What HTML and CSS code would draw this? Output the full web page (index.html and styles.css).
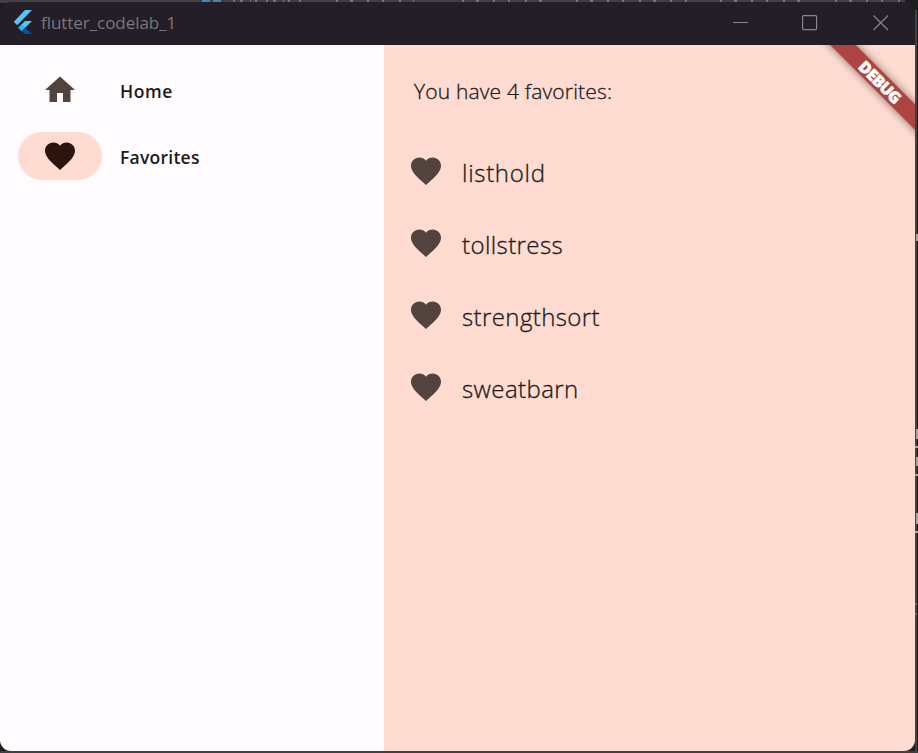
FILE: index.html
```
<!DOCTYPE html>
<html lang="en">
<head>
<meta charset="utf-8">
<title>flutter_codelab_1</title>
<link rel="stylesheet" href="styles.css">
</head>
<body>
<svg class="backdrop" width="918" height="753" aria-hidden="true">
  <path fill="#414144" d="M0 0h905v3H0zM915 10h2v743h-2zM0 751h918v2H0z"/>
  <path fill="#4b83b1" d="M202 0h8v2h-8zM213 0h8v2h-8z"/>
  <path stroke="#777775" stroke-width="2" stroke-dasharray="2 5 3 7 1 4 2 9" d="M233 1h70"/>
  <path stroke="#777775" stroke-width="2" stroke-dasharray="2 12 3 14 2 13 2 15" d="M336 1h78M462 1h88M576 1h118M720 1h90M835 1h73"/>
  <path fill="#a8a8a5" d="M915 446h3v2h-3zM915 474h3v2h-3zM915 531h3v2h-3zM916 429h2v10h-2zM916 457h2v9h-2zM916 513h2v11h-2zM916 234h2v7h-2z"/>
  <path fill="#755e54" d="M915 603h2v2h-2zM915 613h2v2h-2z"/>
</svg>
<div class="window">
  <header class="titlebar">
    <svg class="logo" width="20" height="26" viewBox="0 0 20 26">
      <path fill="#55c5f8" d="M12 1h7L4.2 16.2 0.8 12.7z"/>
      <path fill="#55c5f8" d="M12 12h7l-7 7-6.8-.1z"/>
      <path fill="#29b6f6" d="M8.7 15.3l3.5 3.5-3.5 3.5-3.5-3.5z"/>
      <path fill="#01579b" d="M8.7 22.3l3.5-3.5L19 25h-7.2z"/>
    </svg>
    <span class="title">flutter_codelab_1</span>
    <div class="controls">
      <svg width="16" height="16" viewBox="0 0 16 16"><path d="M0 7.5h15"/></svg>
      <svg width="16" height="16" viewBox="0 0 16 16"><rect x=".6" y=".6" width="14" height="14" rx="1"/></svg>
      <svg width="16" height="16" viewBox="0 0 16 16"><path d="M.5.5l14.5 14.5M15 .5L.5 15"/></svg>
    </div>
  </header>
  <div class="content">
    <nav class="rail">
      <div class="destination">
        <span class="indicator"><svg class="icon" viewBox="0 0 24 24"><path d="M10 20v-6h4v6h5v-8h3L12 3 2 12h3v8z"/></svg></span>
        <span class="label home">Home</span>
      </div>
      <div class="destination selected">
        <span class="indicator"><svg class="icon" viewBox="0 0 24 24"><path d="M12 21.35l-1.45-1.32C5.4 15.36 2 12.28 2 8.5 2 5.42 4.42 3 7.5 3c1.74 0 3.41.81 4.5 2.09C13.09 3.81 14.76 3 16.5 3 19.58 3 22 5.42 22 8.5c0 3.78-3.4 6.86-8.55 11.54z"/></svg></span>
        <span class="label">Favorites</span>
      </div>
    </nav>
    <main class="page">
      <p class="heading">You have 4 favorites:</p>
      <ul class="list">
        <li><svg class="icon" viewBox="0 0 24 24"><path d="M12 21.35l-1.45-1.32C5.4 15.36 2 12.28 2 8.5 2 5.42 4.42 3 7.5 3c1.74 0 3.41.81 4.5 2.09C13.09 3.81 14.76 3 16.5 3 19.58 3 22 5.42 22 8.5c0 3.78-3.4 6.86-8.55 11.54z"/></svg><span class="tall">listhold</span></li>
        <li><svg class="icon" viewBox="0 0 24 24"><path d="M12 21.35l-1.45-1.32C5.4 15.36 2 12.28 2 8.5 2 5.42 4.42 3 7.5 3c1.74 0 3.41.81 4.5 2.09C13.09 3.81 14.76 3 16.5 3 19.58 3 22 5.42 22 8.5c0 3.78-3.4 6.86-8.55 11.54z"/></svg><span>tollstress</span></li>
        <li><svg class="icon" viewBox="0 0 24 24"><path d="M12 21.35l-1.45-1.32C5.4 15.36 2 12.28 2 8.5 2 5.42 4.42 3 7.5 3c1.74 0 3.41.81 4.5 2.09C13.09 3.81 14.76 3 16.5 3 19.58 3 22 5.42 22 8.5c0 3.78-3.4 6.86-8.55 11.54z"/></svg><span>strengthsort</span></li>
        <li><svg class="icon" viewBox="0 0 24 24"><path d="M12 21.35l-1.45-1.32C5.4 15.36 2 12.28 2 8.5 2 5.42 4.42 3 7.5 3c1.74 0 3.41.81 4.5 2.09C13.09 3.81 14.76 3 16.5 3 19.58 3 22 5.42 22 8.5c0 3.78-3.4 6.86-8.55 11.54z"/></svg><span>sweatbarn</span></li>
      </ul>
      <div class="banner">DEBUG</div>
    </main>
  </div>
</div>
</body>
</html>
```
FILE: styles.css
```
* { box-sizing: border-box; }
body {
  margin: 0;
  width: 918px;
  height: 753px;
  overflow: hidden;
  padding: 2px 3px 2px 0;
  background: #1c1c1d;
  font-family: "Open Sans", "Noto Sans", sans-serif;
  color: #201a18;
}
.backdrop { position: absolute; left: 0; top: 0; }
.window {
  position: relative;
  height: 749px;
  display: flex;
  flex-direction: column;
  border-radius: 11px;
  overflow: hidden;
}
.titlebar {
  height: 43px;
  flex: none;
  display: flex;
  align-items: center;
  padding: 0 26px 0 13px;
  background: #231e27;
}
.logo { flex: none; margin-top: -3px; }
.title {
  margin-left: 8px;
  font-size: 17px;
  letter-spacing: -0.05px;
  color: #7b777d;
  line-height: 24px;
  margin-top: -2px;
}
.controls { margin: -2px 0 0 auto; display: flex; gap: 54px; }
.controls svg { fill: none; stroke: #89858b; stroke-width: 1.2; }
.controls svg:nth-child(2) { margin: 0 1px 0 -1px; }
.content { flex: 1; display: flex; }
.rail {
  width: 384px;
  flex: none;
  background: #fffbff;
  padding: 21px 18px;
  display: flex;
  flex-direction: column;
  gap: 18px;
}
.destination { display: flex; align-items: center; height: 48px; }
.indicator {
  width: 84px;
  height: 48px;
  border-radius: 24px;
  display: flex;
  align-items: center;
  justify-content: center;
}
.icon { width: 36px; height: 36px; flex: none; fill: #53433e; }
.selected .indicator { background: #ffdbd1; }
.selected .icon { fill: #2c150e; }
.label {
  margin: 1px 0 0 18px;
  font-size: 17.5px;
  font-weight: 600;
  letter-spacing: 0.25px;
}
.label.home { letter-spacing: 0.55px; }
.page {
  position: relative;
  flex: 1;
  overflow: hidden;
  background: #ffdbd1;
  padding: 30px 24px;
}
.heading {
  margin: 0 0 29px 6px;
  height: 33px;
  line-height: 33px;
  font-size: 21px;
  font-weight: 300;
  -webkit-text-stroke: 0.3px #201a18;
  letter-spacing: 0.17px;
}
.list { margin: 0; padding: 0; list-style: none; }
.list li {
  height: 72px;
  display: flex;
  align-items: flex-start;
  padding-top: 16px;
}
.list span {
  margin-left: 18px;
  padding-top: 2px;
  line-height: 36px;
  font-size: 24px;
  font-weight: 300;
  -webkit-text-stroke: 0.3px #201a18;
  letter-spacing: 0.4px;
}
.list .tall { letter-spacing: 0.7px; }
.banner {
  position: absolute;
  left: 396px;
  top: 28px;
  width: 200px;
  height: 18px;
  transform: rotate(45deg);
  background: #ad4442;
  box-shadow: 0 0 9px rgba(0, 0, 0, 0.5);
  color: #fff;
  font-size: 16px;
  font-weight: 800;
  -webkit-text-stroke: 0.5px #fff;
  line-height: 18px;
  text-align: center;
  letter-spacing: -0.6px;
}
```
